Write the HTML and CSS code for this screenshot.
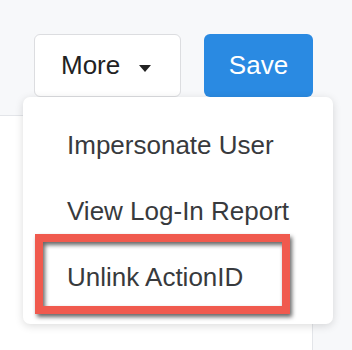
FILE: index.html
```html
<!DOCTYPE html>
<html lang="en">
<head>
  <meta charset="UTF-8" />
  <meta name="viewport" content="width=device-width, initial-scale=1.0"/>
  <title>More actions</title>
  <link rel="stylesheet" href="styles.css">
</head>
<body>

  <div class="toolbar">
    <button class="more-btn">More <span class="caret"></span></button>
    <button class="save-btn">Save</button>
  </div>

  <div class="panel"></div>

  <!-- Dropdown menu -->
  <div class="menu">
    <div class="menu-item">Impersonate User</div>
    <div class="menu-item">View Log-In Report</div>
    <div class="menu-item highlight">Unlink ActionID</div>
  </div>

</body>
</html>
```

FILE: styles.css
```css
body {
  margin: 0;
  padding: 0;
  background: #f7f8fa;
  font-family: 'Liberation Sans', Arial, sans-serif;
  width: 352px;
  height: 350px;
  overflow: hidden;
  position: relative;
}
.toolbar {
  display: flex;
  gap: 23px;
  padding: 34px 0 0 34px;
  height: 81px;
  box-sizing: border-box;
}
button {
  height: 63px;
  border-radius: 6px;
  font-family: inherit;
  font-size: 26px;
  cursor: pointer;
}
.more-btn {
  width: 147px;
  display: flex;
  align-items: center;
  padding: 0 0 0 26px;
  background: #fff;
  border: 1.5px solid #dcdde0;
  color: #222;
}
.caret {
  margin: 5px 0 0 19px;
  width: 0;
  height: 0;
  border-left: 6px solid transparent;
  border-right: 6px solid transparent;
  border-top: 7px solid #222;
}
.save-btn {
  width: 109px;
  background: #2a8ae2;
  border: none;
  color: #fff;
}
.panel {
  width: 312px;
  height: 240px;
  margin-top: 34px;
  background: #fff;
  border-top: 1px solid #e3e5e9;
  border-right: 1px solid #e3e5e9;
}
.menu {
  position: absolute;
  left: 23px;
  top: 97px;
  width: 310px;
  padding: 15px 0 14px;
  background: #fff;
  border-radius: 7px;
  box-shadow: 0 2px 8px rgba(0, 0, 0, 0.14);
}
.menu-item {
  position: relative;
  height: 66px;
  line-height: 66px;
  padding-left: 44px;
  font-size: 26px;
  color: #383a3d;
}
.highlight::after {
  content: "";
  position: absolute;
  left: 12px;
  top: -10px;
  width: 255px;
  height: 80px;
  box-sizing: border-box;
  border: 8px solid #f05a4e;
  filter: drop-shadow(2px 3px 2px rgba(0, 0, 0, 0.6));
}
```
